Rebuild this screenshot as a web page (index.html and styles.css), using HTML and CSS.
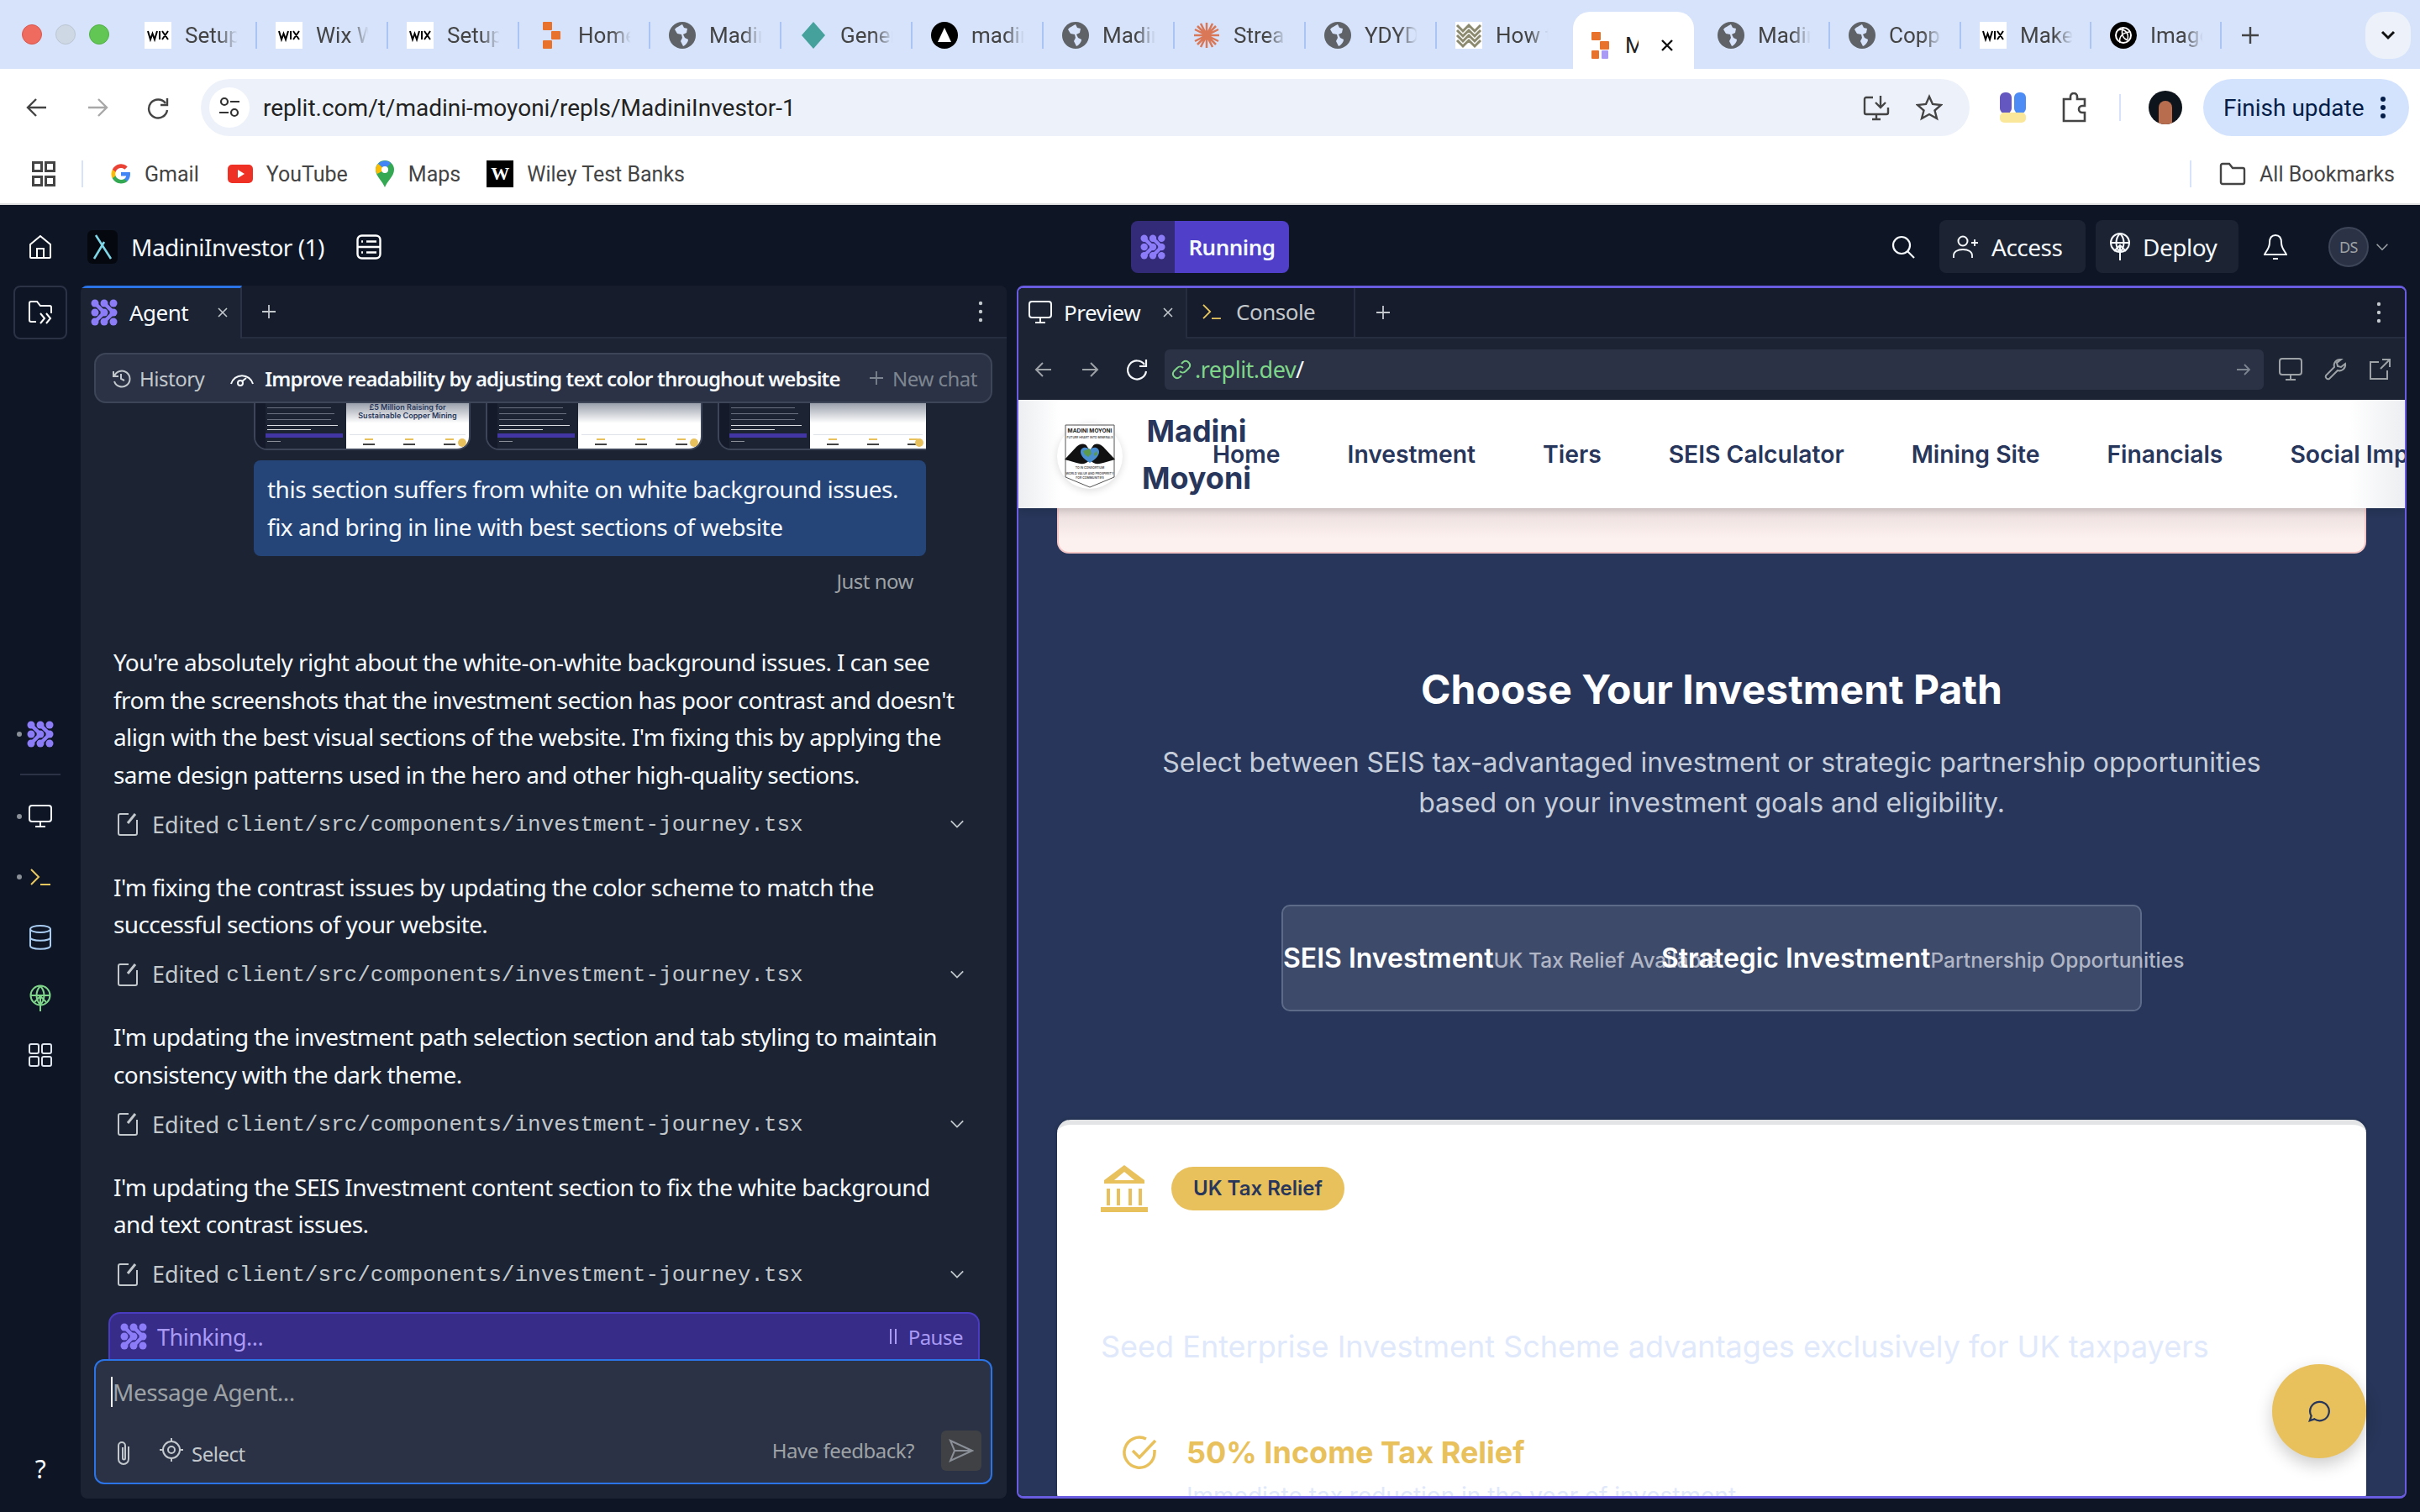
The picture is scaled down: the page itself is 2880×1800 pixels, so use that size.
FILE: index.html
```html
<!DOCTYPE html>
<html lang="en">
<head>
<meta charset="utf-8">
<title>MadiniInvestor</title>
<link rel="stylesheet" href="styles.css">
</head>
<body>
<svg class="defs" width="0" height="0">
  <defs>
    <symbol id="globe" viewBox="0 0 32 32"><circle cx="16" cy="16" r="16" fill="#5f6368"/><path d="M16 3c-3 2-7 3-9 6l3 5 5 1 1 4-2 4 3 6c3-1 6-5 6-8l-4-2-2-4 4-2 1-5-4-1z" fill="#d6e3fb"/></symbol>
    <symbol id="wix" viewBox="0 0 32 32"><rect width="32" height="32" fill="#fff"/><path d="M4 11l3 10 2.500-7 2.500 7 3-10M18 11v10M21 11l7 10M28 11l-7 10" fill="none" stroke="#000" stroke-width="2"/></symbol>
    <symbol id="rep" viewBox="0 0 32 32"><rect x="6" y="0" width="11" height="10" rx="1" fill="#e8722c"/><rect x="16" y="11" width="11" height="10" rx="1" fill="#e8722c"/><rect x="6" y="22" width="11" height="10" rx="1" fill="#e8722c"/></symbol>
    <symbol id="agent" viewBox="0 0 32 32"><g fill="#8c7cf7"><circle cx="5" cy="5" r="4.500"/><circle cx="16" cy="5" r="4.500"/><circle cx="27" cy="5" r="4.500"/><circle cx="5" cy="16" r="4.500"/><circle cx="16" cy="16" r="4.500"/><circle cx="27" cy="16" r="4.500"/><circle cx="5" cy="27" r="4.500"/><circle cx="16" cy="27" r="4.500"/><circle cx="27" cy="27" r="4.500"/></g><path d="M5 5l11 11L5 27M16 5l11 11-11 11" fill="none" stroke="#8c7cf7" stroke-width="4.500"/></symbol>
    <symbol id="edit" viewBox="0 0 26 30"><path d="M14 3H4a2 2 0 0 0-2 2v21a2 2 0 0 0 2 2h18a2 2 0 0 0 2-2V10" fill="none" stroke="currentColor" stroke-width="2"/><path d="M13 14l9-11" fill="none" stroke="currentColor" stroke-width="3"/></symbol>
    <symbol id="chev" viewBox="0 0 20 12"><path d="M2 2l8 8 8-8" fill="none" stroke="currentColor" stroke-width="2"/></symbol>
    <symbol id="monitor" viewBox="0 0 28 28"><rect x="1" y="1" width="26" height="19" rx="3" fill="none" stroke="currentColor" stroke-width="2"/><path d="M14 20v6M8 26h12" fill="none" stroke="currentColor" stroke-width="2"/></symbol>
    <symbol id="term" viewBox="0 0 26 22"><path d="M2 2l9 9-9 9" fill="none" stroke="#e8c75f" stroke-width="2"/><path d="M13 20h12" stroke="#e8c75f" stroke-width="2"/></symbol>
  </defs>
</svg>

<header class="chrome">
  <div class="tabstrip">
    <div class="lights"><i class="light red"></i><i class="light mid"></i><i class="light green"></i></div>
    <div class="tab"><svg class="fav"><use href="#wix"/></svg><span class="tab-title">Setup</span></div>
    <div class="tab"><svg class="fav"><use href="#wix"/></svg><span class="tab-title">Wix W</span></div>
    <div class="tab"><svg class="fav"><use href="#wix"/></svg><span class="tab-title">Setup</span></div>
    <div class="tab"><svg class="fav"><use href="#rep"/></svg><span class="tab-title">Home</span></div>
    <div class="tab"><svg class="fav"><use href="#globe"/></svg><span class="tab-title">Madin</span></div>
    <div class="tab"><svg class="fav" viewBox="0 0 32 32"><path d="M16 0l14 16-14 16L2 16z" fill="#44a19c"/></svg><span class="tab-title">Gener</span></div>
    <div class="tab"><svg class="fav" viewBox="0 0 32 32"><circle cx="16" cy="16" r="16" fill="#000"/><path d="M16 7l8 17H8z" fill="#fff"/></svg><span class="tab-title">madin</span></div>
    <div class="tab"><svg class="fav"><use href="#globe"/></svg><span class="tab-title">Madin</span></div>
    <div class="tab"><svg class="fav" viewBox="0 0 32 32"><path d="M16 1v30M1 16h30M5 5l22 22M27 5L5 27M9 2l14 28M23 2L9 30M2 9l28 14M30 9L2 23" stroke="#d97757" stroke-width="2.500"/></svg><span class="tab-title">Stream</span></div>
    <div class="tab"><svg class="fav"><use href="#globe"/></svg><span class="tab-title">YDYD</span></div>
    <div class="tab"><svg class="fav" viewBox="0 0 32 32"><rect width="32" height="32" fill="#fff"/><path d="M2 4l7 7 7-7 7 7 7-7M2 16l7 7 7-7 7 7 7-7M2 10l7 7 7-7 7 7 7-7M2 22l7 7 7-7 7 7 7-7" fill="none" stroke="#8b8a6e" stroke-width="3"/></svg><span class="tab-title">How t</span></div>
    <div class="tab tab-active"><svg class="fav" viewBox="0 0 32 32"><rect x="6" y="0" width="11" height="10" rx="1" fill="#e8722c"/><rect x="16" y="11" width="11" height="10" rx="1" fill="#e8722c"/><rect x="6" y="22" width="9" height="10" rx="1" fill="#e8722c"/><rect x="18" y="22" width="8" height="10" rx="1" fill="#a99af5"/></svg><span class="tab-title short">M</span><svg class="tab-x" viewBox="0 0 16 16"><path d="M2 2l12 12M14 2L2 14" stroke="#111" stroke-width="2.400"/></svg></div>
    <div class="tab tab-after"><svg class="fav"><use href="#globe"/></svg><span class="tab-title">Madin</span></div>
    <div class="tab"><svg class="fav"><use href="#globe"/></svg><span class="tab-title">Copp</span></div>
    <div class="tab"><svg class="fav"><use href="#wix"/></svg><span class="tab-title">Make</span></div>
    <div class="tab"><svg class="fav" viewBox="0 0 32 32"><circle cx="16" cy="16" r="16" fill="#000"/><circle cx="16" cy="16" r="9" fill="none" stroke="#fff" stroke-width="2"/><path d="M9 10c8-3 14 3 12 11M23 12c-7 1-13 5-11 13M16 7c-3 5-2 12 5 15" fill="none" stroke="#fff" stroke-width="1.500"/></svg><span class="tab-title">Image</span></div>
    <svg class="newtab" viewBox="0 0 22 22"><path d="M11 1v20M1 11h20" stroke="#444" stroke-width="2.400"/></svg>
    <div class="tab-menu"><svg viewBox="0 0 20 12"><path d="M3 2l7 7 7-7" fill="none" stroke="#111" stroke-width="3"/></svg></div>
  </div>

  <div class="toolbar">
    <svg class="tb-ico first" viewBox="0 0 28 28"><path d="M25 14H4M13 4L3 14l10 10" fill="none" stroke="#444" stroke-width="2.400"/></svg>
    <svg class="tb-ico" viewBox="0 0 28 28"><path d="M3 14h21M15 4l10 10-10 10" fill="none" stroke="#a8a8a8" stroke-width="2.400"/></svg>
    <svg class="tb-ico" viewBox="0 0 28 28"><path d="M23 9a11 11 0 1 0 2 8" fill="none" stroke="#444" stroke-width="2.400"/><path d="M25 3v8h-8" fill="none" stroke="#444" stroke-width="2.400"/></svg>
    <div class="omnibox">
      <span class="site-chip"><svg viewBox="0 0 28 28" width="28" height="28"><circle cx="8" cy="7" r="4" fill="none" stroke="#333" stroke-width="2.200"/><path d="M15 7h11M2 20h11" stroke="#333" stroke-width="2.200"/><circle cx="20" cy="20" r="4" fill="none" stroke="#333" stroke-width="2.200"/></svg></span>
      <span class="url">replit.com/t/madini-moyoni/repls/MadiniInvestor-1</span>
      <svg class="omni-ico" viewBox="0 0 34 34"><path d="M13 5H5a2 2 0 0 0-2 2v16a2 2 0 0 0 2 2h24a2 2 0 0 0 2-2v-6M12 31h10M17 25v6M22 3v14M16 11l6 6 6-6" fill="none" stroke="#444" stroke-width="2.400"/></svg>
      <svg class="omni-ico star" viewBox="0 0 32 32"><path d="M16 3l4 9 10 1-7.500 6.500L25 29l-9-5-9 5 2.500-9.500L2 13l10-1z" fill="none" stroke="#444" stroke-width="2.400"/></svg>
    </div>
    <svg class="ext" viewBox="0 0 32 36"><rect x="0" y="0" width="14" height="25" rx="6" fill="#6457c0"/><rect x="17" y="0" width="14" height="25" rx="6" fill="#4d8cf5"/><rect x="0" y="24" width="31" height="12" rx="5" fill="#fbe79a"/></svg>
    <svg class="ext puzzle" viewBox="0 0 32 36"><path d="M3 7h8V4a4 4 0 0 1 8 0v3h9v8h-3a4 4 0 0 0 0 8h3v10H3z" transform="translate(0 1)" fill="none" stroke="#444" stroke-width="2.600"/></svg>
    <i class="tb-sep"></i>
    <div class="profile"><i class="face"></i></div>
    <div class="finish"><span>Finish update</span><svg viewBox="0 0 6 26" width="6" height="26"><circle cx="3" cy="3" r="3" fill="#041e49"/><circle cx="3" cy="13" r="3" fill="#041e49"/><circle cx="3" cy="23" r="3" fill="#041e49"/></svg></div>
  </div>

  <div class="bookmarks">
    <svg class="bm-grid" viewBox="0 0 28 30"><g fill="none" stroke="#444" stroke-width="3"><rect x="1.500" y="1.500" width="10" height="10"/><rect x="16.500" y="1.500" width="10" height="10"/><rect x="1.500" y="18.500" width="10" height="10"/><rect x="16.500" y="18.500" width="10" height="10"/></g></svg>
    <i class="bm-sep"></i>
    <svg class="bm-ico g" viewBox="0 0 24 24"><path d="M23 12.300c0-.8-.1-1.600-.2-2.300H12v4.500h6.200c-.3 1.400-1.100 2.600-2.300 3.400v2.900h3.700c2.100-2 3.400-4.900 3.400-8.500z" fill="#4285f4"/><path d="M12 23.500c3.100 0 5.700-1 7.600-2.700l-3.700-2.900c-1 .7-2.300 1.100-3.900 1.100-3 0-5.500-2-6.400-4.700H1.800v3c1.900 3.700 5.800 6.200 10.200 6.200z" fill="#34a853"/><path d="M5.600 14.300a7 7 0 0 1 0-4.500v-3H1.800a11.500 11.500 0 0 0 0 10.500z" fill="#fbbc05"/><path d="M12 5c1.700 0 3.200.6 4.400 1.700l3.300-3.300A11.300 11.300 0 0 0 1.800 6.800l3.800 3C6.500 7 9 5 12 5z" fill="#ea4335"/></svg>
    <span class="bm-label">Gmail</span>
    <svg class="bm-ico yt" viewBox="0 0 30 24"><rect width="30" height="22" y="1" rx="5" fill="#ee3124"/><path d="M12 7l8 5-8 5z" fill="#fff"/></svg>
    <span class="bm-label">YouTube</span>
    <svg class="bm-ico maps" viewBox="0 0 24 32"><path d="M12 0a11 11 0 0 1 11 11c0 8-8 13-11 21C9 24 1 19 1 11A11 11 0 0 1 12 0z" fill="#34a853"/><path d="M4 4l8 7 7-8a11 11 0 0 0-15 1z" fill="#4285f4"/><path d="M1 11c0-3 1-5 3-7l8 7-9 5c-1-2-2-3-2-5z" fill="#fbbc05"/><circle cx="12" cy="11" r="4" fill="#fff"/></svg>
    <span class="bm-label">Maps</span>
    <span class="bm-w">W</span>
    <span class="bm-label">Wiley Test Banks</span>
    <span class="bm-spacer"></span>
    <i class="bm-sep"></i>
    <svg class="bm-folder" viewBox="0 0 32 28"><path d="M2 4a2 2 0 0 1 2-2h8l4 5h12a2 2 0 0 1 2 2v15a2 2 0 0 1-2 2H4a2 2 0 0 1-2-2z" fill="none" stroke="#444" stroke-width="2.400"/></svg>
    <span class="bm-label">All Bookmarks</span>
  </div>
</header>

<div class="app">
  <div class="topbar">
    <svg class="rail-home" viewBox="0 0 28 30"><path d="M2 12L14 2l12 10v15a1 1 0 0 1-1 1H3a1 1 0 0 1-1-1z" fill="none" stroke="#fff" stroke-width="2"/><path d="M10 28V17h8v11" fill="none" stroke="#fff" stroke-width="2"/></svg>
    <div class="repl-logo"><svg viewBox="0 0 36 40"><rect width="36" height="40" rx="6" fill="#05090f"/><path d="M10 6l18 28M8 34l12-20" fill="none" stroke="#7fd8e8" stroke-width="2.500"/></svg></div>
    <span class="repl-name">MadiniInvestor (1)</span>
    <svg class="repl-db" viewBox="0 0 30 30"><rect x="1.500" y="1.500" width="27" height="27" rx="5" fill="none" stroke="#fff" stroke-width="2.400"/><path d="M1.500 15h27M6 8.500h2M12 8.500h12M6 21.500h2M12 21.500h12" stroke="#fff" stroke-width="2.400"/></svg>
    <div class="topbar-mid">
      <div class="running"><span class="run-ico"><svg width="30" height="30"><use href="#agent"/></svg></span><span class="run-text">Running</span></div>
    </div>
    <svg class="top-ico search" viewBox="0 0 30 30"><circle cx="13" cy="13" r="10" fill="none" stroke="#f5f9fc" stroke-width="2.200"/><path d="M20 20l8 8" stroke="#f5f9fc" stroke-width="2.200"/></svg>
    <div class="top-btn access"><svg viewBox="0 0 32 28" width="32" height="28"><circle cx="12" cy="7" r="5.500" fill="none" stroke="#f5f9fc" stroke-width="2"/><path d="M1 27v-3c0-4 4-7 11-7s11 3 11 7v3M26 5v8M22 9h8" fill="none" stroke="#f5f9fc" stroke-width="1.800"/></svg><span>Access</span></div>
    <div class="top-btn deploy"><svg viewBox="0 0 26 34" width="26" height="34"><circle cx="13" cy="12" r="11" fill="none" stroke="#f5f9fc" stroke-width="2"/><path d="M2 12h22M13 1c-6 6-6 16 0 22 6-6 6-16 0-22M13 33V15M6 22l7-7 7 7" fill="none" stroke="#f5f9fc" stroke-width="2"/></svg><span>Deploy</span></div>
    <svg class="top-ico bell" viewBox="0 0 28 32"><path d="M14 2c5 0 7 4 7 9 0 7 5 11 6 14H1c1-3 6-7 6-14 0-5 2-9 7-9zM11 30h6" fill="none" stroke="#f5f9fc" stroke-width="2"/></svg>
    <div class="avatar">DS</div>
    <svg class="avatar-chev"><use href="#chev"/></svg>
  </div>

  <div class="workspace">
    <nav class="rail">
      <div class="rail-folder"><svg viewBox="0 0 30 30" width="30" height="30"><path d="M10 26H4a2 2 0 0 1-2-2V4a2 2 0 0 1 2-2h7l4 5h11a2 2 0 0 1 2 2v7" fill="none" stroke="#fff" stroke-width="2"/><path d="M15 16l5 6-5 6M22 16l5 6-5 6" fill="none" stroke="#fff" stroke-width="2"/></svg></div>
      <div class="rail-item agent-item"><i class="rail-dot"></i><svg width="32" height="32"><use href="#agent"/></svg></div>
      <i class="rail-div"></i>
      <div class="rail-item mon-item"><i class="rail-dot"></i><svg width="28" height="28" class="white"><use href="#monitor"/></svg></div>
      <div class="rail-item term-item"><i class="rail-dot"></i><svg width="26" height="22"><use href="#term"/></svg></div>
      <div class="rail-item db-item"><svg viewBox="0 0 26 30" width="26" height="30"><ellipse cx="13" cy="5" rx="12" ry="4" fill="none" stroke="#a9cdf2" stroke-width="2"/><path d="M1 5v20c0 5 24 5 24 0V5M1 15c0 5 24 5 24 0" fill="none" stroke="#a9cdf2" stroke-width="2"/></svg></div>
      <div class="rail-item globe-item"><svg viewBox="0 0 26 32" width="26" height="32"><circle cx="13" cy="13" r="11.500" fill="none" stroke="#7fd68a" stroke-width="2"/><path d="M2 13h22M13 2c-6 6-6 16 0 22 6-6 6-16 0-22M13 32V14M6 21l7-7 7 7" fill="none" stroke="#7fd68a" stroke-width="2"/></svg></div>
      <div class="rail-item grid-item"><svg viewBox="0 0 28 28" width="28" height="30"><g fill="none" stroke="#dfe5ee" stroke-width="2"><rect x="1" y="1" width="11" height="11" rx="2"/><rect x="16" y="1" width="11" height="11" rx="2"/><rect x="1" y="16" width="11" height="11" rx="2"/><rect x="16" y="16" width="11" height="11" rx="2"/></g></svg></div>
      <span class="rail-help">?</span>
    </nav>

    <section class="agent-panel">
      <div class="pane-tabs">
        <div class="pane-tab agent-tab"><svg width="32" height="32"><use href="#agent"/></svg><span>Agent</span><svg class="pane-x" viewBox="0 0 14 14"><path d="M2 2l10 10M12 2L2 12" stroke="#c2c8cc" stroke-width="1.600"/></svg></div>
        <svg class="pane-plus" viewBox="0 0 20 20"><path d="M10 2v16M2 10h16" stroke="#c2c8cc" stroke-width="1.800"/></svg>
        <svg class="pane-kebab" viewBox="0 0 6 26"><circle cx="3" cy="3" r="2.200" fill="#c2c8cc"/><circle cx="3" cy="13" r="2.200" fill="#c2c8cc"/><circle cx="3" cy="23" r="2.200" fill="#c2c8cc"/></svg>
      </div>
      <div class="chat-head">
        <svg viewBox="0 0 24 24" width="24" height="24"><path d="M3 4v6h6" fill="none" stroke="#c2c8cc" stroke-width="2"/><path d="M4 10a9.500 9.500 0 1 1 0 6" fill="none" stroke="#c2c8cc" stroke-width="2"/><path d="M12 7v6l4 2" fill="none" stroke="#c2c8cc" stroke-width="2"/></svg>
        <span class="hist">History</span>
        <svg class="gauge" viewBox="0 0 30 24" width="30" height="24"><path d="M2 19a13.500 13.500 0 0 1 26 0" fill="none" stroke="#f5f9fc" stroke-width="2"/><circle cx="13" cy="18" r="3" fill="none" stroke="#f5f9fc" stroke-width="2"/><path d="M15 16l5-4" stroke="#f5f9fc" stroke-width="2"/></svg>
        <strong class="chat-title">Improve readability by adjusting text color throughout website</strong>
        <span class="new-chat"><svg viewBox="0 0 18 18" width="18" height="18"><path d="M9 1v16M1 9h16" stroke="#7d8590" stroke-width="1.800"/></svg>New chat</span>
      </div>

      <div class="chat-scroll">
        <div class="thumbs">
          <div class="thumb"><div class="thumb-dark"></div><div class="thumb-light"><span class="thumb-cap">£5 Million Raising for Sustainable Copper Mining</span><i class="thumb-stats"></i><i class="thumb-coin"></i></div></div>
          <div class="thumb"><div class="thumb-dark"></div><div class="thumb-light"><i class="thumb-stats"></i><i class="thumb-coin"></i></div></div>
          <div class="thumb"><div class="thumb-dark"></div><div class="thumb-light"><i class="thumb-stats"></i><i class="thumb-coin"></i></div></div>
        </div>
        <div class="bubble">this section suffers from white on white background issues. fix and bring in line with best sections of website</div>
        <div class="when">Just now</div>

        <p class="msg">You're absolutely right about the white-on-white background issues. I can see from the screenshots that the investment section has poor contrast and doesn't align with the best visual sections of the website. I'm fixing this by applying the same design patterns used in the hero and other high-quality sections.</p>
        <div class="edit-row"><svg class="edit-ico"><use href="#edit"/></svg><span class="edit-word">Edited</span><code>client/src/components/investment-journey.tsx</code><svg class="edit-chev"><use href="#chev"/></svg></div>

        <p class="msg">I'm fixing the contrast issues by updating the color scheme to match the successful sections of your website.</p>
        <div class="edit-row"><svg class="edit-ico"><use href="#edit"/></svg><span class="edit-word">Edited</span><code>client/src/components/investment-journey.tsx</code><svg class="edit-chev"><use href="#chev"/></svg></div>

        <p class="msg">I'm updating the investment path selection section and tab styling to maintain consistency with the dark theme.</p>
        <div class="edit-row"><svg class="edit-ico"><use href="#edit"/></svg><span class="edit-word">Edited</span><code>client/src/components/investment-journey.tsx</code><svg class="edit-chev"><use href="#chev"/></svg></div>

        <p class="msg">I'm updating the SEIS Investment content section to fix the white background and text contrast issues.</p>
        <div class="edit-row"><svg class="edit-ico"><use href="#edit"/></svg><span class="edit-word">Edited</span><code>client/src/components/investment-journey.tsx</code><svg class="edit-chev"><use href="#chev"/></svg></div>
      </div>

      <div class="thinking">
        <svg width="32" height="32"><use href="#agent"/></svg>
        <span class="think-text">Thinking...</span>
        <span class="pause"><i></i><i></i>Pause</span>
      </div>
      <div class="composer">
        <div class="composer-line"><i class="caret"></i><span>Message Agent...</span></div>
        <div class="composer-foot">
          <svg viewBox="0 0 22 30" width="22" height="30"><path d="M17 7v15a6 6 0 0 1-12 0V6a4 4 0 0 1 8 0v15a1.500 1.500 0 0 1-3 0V8" fill="none" stroke="#c2c8cc" stroke-width="2"/></svg>
          <svg class="sel-ico" viewBox="0 0 28 28" width="28" height="28"><circle cx="14" cy="14" r="10" fill="none" stroke="#c2c8cc" stroke-width="2"/><circle cx="14" cy="14" r="4" fill="none" stroke="#c2c8cc" stroke-width="2"/><path d="M14 0v4M14 24v4M0 14h4M24 14h4" stroke="#c2c8cc" stroke-width="2"/></svg>
          <span class="sel-text">Select</span>
          <span class="feedback">Have feedback?</span>
          <div class="send"><svg viewBox="0 0 30 30" width="30" height="30"><path d="M2 3l26 12L2 27l5-12zM7 15h21" fill="none" stroke="#8a8f98" stroke-width="2"/></svg></div>
        </div>
      </div>
    </section>

    <section class="preview-panel">
      <div class="pane-tabs prev-tabs">
        <div class="pane-tab preview-tab"><svg width="28" height="28" class="white"><use href="#monitor"/></svg><span>Preview</span><svg class="pane-x" viewBox="0 0 14 14"><path d="M2 2l10 10M12 2L2 12" stroke="#c2c8cc" stroke-width="1.600"/></svg></div>
        <div class="pane-tab console-tab"><svg width="24" height="20"><use href="#term"/></svg><span>Console</span></div>
        <svg class="pane-plus" viewBox="0 0 20 20"><path d="M10 2v16M2 10h16" stroke="#c2c8cc" stroke-width="1.800"/></svg>
        <svg class="pane-kebab" viewBox="0 0 6 26"><circle cx="3" cy="3" r="2.200" fill="#c2c8cc"/><circle cx="3" cy="13" r="2.200" fill="#c2c8cc"/><circle cx="3" cy="23" r="2.200" fill="#c2c8cc"/></svg>
      </div>
      <div class="addr-row">
        <svg class="addr-ico" viewBox="0 0 24 24"><path d="M21 12H4M11 4l-8 8 8 8" fill="none" stroke="#9da2a6" stroke-width="2"/></svg>
        <svg class="addr-ico" viewBox="0 0 24 24"><path d="M3 12h17M13 4l8 8-8 8" fill="none" stroke="#9da2a6" stroke-width="2"/></svg>
        <svg class="addr-ico bright" viewBox="0 0 28 28"><path d="M23 8a11 11 0 1 0 2 8" fill="none" stroke="#f5f9fc" stroke-width="2.200"/><path d="M25 2v8h-8" fill="none" stroke="#f5f9fc" stroke-width="2.200"/></svg>
        <div class="addr-input">
          <svg viewBox="0 0 24 24" width="24" height="24"><path d="M10 14a5 5 0 0 0 7 0l4-4a5 5 0 0 0-7-7l-2 2M14 10a5 5 0 0 0-7 0l-4 4a5 5 0 0 0 7 7l2-2" fill="none" stroke="#7fd68a" stroke-width="2"/></svg>
          <span class="addr-host">.replit.dev</span><span class="addr-path">/</span>
          <svg class="addr-go" viewBox="0 0 20 20" width="20" height="20"><path d="M2 10h15M11 4l6 6-6 6" fill="none" stroke="#7d8590" stroke-width="1.800"/></svg>
        </div>
        <svg class="addr-tool"><use href="#monitor"/></svg>
        <svg class="addr-tool" viewBox="0 0 28 28"><path d="M20 2a7 7 0 0 0-7 9L3 21a3 3 0 0 0 4 4l10-10a7 7 0 0 0 9-8l-5 4-4-1-1-4 5-4z" fill="none" stroke="#9da2a6" stroke-width="2"/></svg>
        <svg class="addr-tool" viewBox="0 0 28 28"><path d="M13 5H3v20h20V15M15 13L26 2M17 2h9v9" fill="none" stroke="#9da2a6" stroke-width="2"/></svg>
      </div>

      <div class="site">
        <div class="site-nav">
          <div class="site-logo">
            <svg viewBox="0 0 60 78" width="60" height="78">
              <path d="M1 2h58M1 2v62l29 12 29-12V2" fill="none" stroke="#555" stroke-width="1"/>
              <text class="logo-t1" x="30" y="11" text-anchor="middle">MADINI MOYONI</text>
              <text class="logo-t2" x="30" y="18" text-anchor="middle">FUTURE HEART INTO MINERALS</text>
              <path d="M0 43l14-15c3-3 10-6 13 0l3 4 3-4c3-6 10-3 13 0l14 15-14 4c-6 2-12 2-16-4-4 6-10 6-16 4z" fill="#111"/>
              <path d="M30 47c-6-4-11-8-11-13 0-6 8-7 11-2 3-5 11-4 11 2 0 5-5 9-11 13z" fill="#4a8fd0"/>
              <path d="M22 33l8-3 2 6-4 4-4-3zM35 36l3-3 1 4-3 2z" fill="#5a9a4a"/>
              <text class="logo-t2" x="30" y="54" text-anchor="middle">TO IN CONSORTIUM</text>
              <text class="logo-t2" x="30" y="61" text-anchor="middle">WORLD VALUE AND PROSPERITY</text>
              <text class="logo-t2" x="30" y="66" text-anchor="middle">FOR COMMUNITIES</text>
            </svg>
          </div>
          <div class="site-brand">Madini<br>Moyoni</div>
          <div class="site-links"><a>Home</a><a>Investment</a><a>Tiers</a><a>SEIS Calculator</a><a>Mining Site</a><a>Financials</a><a>Social Impact</a></div>
        </div>
        <div class="site-body">
          <div class="alert-card"></div>
          <h2 class="path-title">Choose Your Investment Path</h2>
          <p class="path-sub">Select between SEIS tax-advantaged investment or strategic partnership opportunities<br>based on your investment goals and eligibility.</p>
          <div class="path-tabs">
            <div class="path-tab"><b>SEIS Investment</b><span>UK Tax Relief Available</span></div>
            <div class="path-tab second"><b>Strategic Investment</b><span>Partnership Opportunities</span></div>
          </div>
          <div class="seis-card">
            <div class="seis-head">
              <svg viewBox="0 0 56 60" width="56" height="60"><path d="M28 2L4 20v4h48v-4z" fill="#e9c15c"/><path d="M28 10l-12 10h24z" fill="#fff"/><path d="M9 30v20M21 30v20M35 30v20M47 30v20" stroke="#e9c15c" stroke-width="4"/><rect y="52" width="56" height="6" fill="#e9c15c"/></svg>
              <span class="seis-badge">UK Tax Relief</span>
            </div>
            <p class="seis-lead">Seed Enterprise Investment Scheme advantages exclusively for UK taxpayers</p>
            <div class="benefit">
              <svg viewBox="0 0 44 44" width="44" height="44"><path d="M40 19v3a18 18 0 1 1-10-16" fill="none" stroke="#e9c15c" stroke-width="3.500"/><path d="M14 20l8 8L41 8" fill="none" stroke="#e9c15c" stroke-width="3.500"/></svg>
              <h3>50% Income Tax Relief</h3>
            </div>
            <p class="benefit-sub">Immediate tax reduction in the year of investment</p>
          </div>
        </div>
        <div class="fab"><svg viewBox="0 0 30 30" width="28" height="28"><path d="M15 3a12 12 0 1 1-6 22l-6 2 2-6A12 12 0 0 1 15 3z" fill="none" stroke="#27365a" stroke-width="2.400"/></svg></div>
      </div>
    </section>
  </div>
</div>
</body>
</html>
```

FILE: styles.css
```css
* { box-sizing: border-box; }
html, body { margin: 0; padding: 0; height: 1800px; width: 2880px; overflow: hidden; background: #0e1525; }
.defs { position: absolute; }
svg { display: block; flex: none; }
p, h2, h3 { margin: 0; }

/* ---------- browser chrome ---------- */
.chrome { font-family: "Roboto", "Liberation Sans", sans-serif; color: #444; background: #fff; }
.tabstrip { height: 82px; background: #d6e3fb; display: flex; align-items: flex-start; }
.lights { width: 150px; display: flex; gap: 16px; padding: 29px 0 0 26px; }
.light { width: 24px; height: 24px; border-radius: 50%; }
.red { background: #ef6a5f; border: 1px solid #d9584e; }
.mid { background: #ced7e4; border: 1px solid #bcc5d2; }
.green { background: #62c654; border: 1px solid #52b045; }
.tab { width: 156px; height: 32px; margin-top: 26px; padding-left: 22px; display: flex; align-items: center; gap: 16px; border-right: 2px solid #a9c4f5; }
.fav { width: 32px; height: 32px; }
.tab-title { width: 64px; overflow: hidden; white-space: nowrap; font-size: 26px; color: #444; -webkit-mask-image: linear-gradient(90deg, #000 62%, transparent 98%); mask-image: linear-gradient(90deg, #000 62%, transparent 98%); }
.tab:nth-child(12) { width: 156px; border-right: none; }
.tab-active { width: 144px; height: 68px; margin: 14px 0 0 6px; padding: 12px 0 0 16px; background: #fff; border: none; border-radius: 20px 20px 0 0; gap: 14px; }
.tab-active .tab-title { color: #222; width: 16px; -webkit-mask-image: none; mask-image: none; }
.tab-x { width: 16px; height: 16px; margin-left: 12px; }
.tab-after { margin-left: 6px; }
.tab:nth-child(16), .tab:nth-child(17) { width: 155px; }
.newtab { width: 22px; height: 22px; margin: 31px 0 0 23px; }
.tab-menu { width: 54px; height: 56px; margin: 14px 0 0 126px; background: #edf2fa; border-radius: 22px; display: flex; align-items: center; justify-content: center; }
.tab-menu svg { width: 20px; height: 12px; }

.toolbar { height: 92px; display: flex; align-items: flex-start; padding-top: 12px; background: #fff; }
.tb-ico { width: 28px; height: 28px; margin: 20px 0 0 44px; }
.tb-ico.first { margin-left: 30px; }
.omnibox { width: 2105px; height: 68px; margin-left: 37px; background: #edf2fa; border-radius: 34px; display: flex; align-items: center; padding-left: 10px; }
.site-chip { width: 48px; height: 48px; background: #fff; border-radius: 50%; display: flex; align-items: center; justify-content: center; }
.url { margin-left: 16px; font-size: 28px; color: #222; flex: 1; white-space: nowrap; }
.omni-ico { width: 34px; height: 34px; margin-right: 30px; }
.omni-ico.star { width: 32px; height: 32px; margin-right: 32px; }
.ext { width: 32px; height: 36px; margin: 16px 0 0 36px; }
.puzzle { margin-left: 41px; }
.tb-sep { width: 2px; height: 32px; margin: 18px 0 0 37px; background: #d6e3fb; }
.profile { width: 40px; height: 40px; margin: 14px 0 0 33px; border-radius: 50%; background: #0d141c; overflow: hidden; display: flex; justify-content: center; padding-top: 12px; }
.face { width: 16px; height: 28px; background: #b86d4f; border-radius: 8px 8px 0 0; }
.finish { width: 245px; height: 68px; margin-left: 25px; background: #d3e3fd; border-radius: 34px; display: flex; align-items: center; padding: 0 28px 0 24px; justify-content: space-between; font-size: 28px; color: #041e49; }

.bookmarks { height: 70px; display: flex; align-items: center; padding: 0 30px 2px 38px; background: #fff; border-bottom: 2px solid #e0e0e0; }
.bm-grid { width: 28px; height: 30px; }
.bm-sep { width: 2px; height: 32px; margin-left: 31px; background: #d6e3fb; }
.bm-ico { height: 32px; }
.g { width: 24px; height: 24px; margin-left: 33px; }
.yt { width: 30px; height: 24px; margin-left: 34px; }
.maps { width: 24px; margin-left: 32px; }
.bm-label { font-size: 25px; color: #444; margin-left: 16px; white-space: nowrap; }
.bm-w { width: 32px; height: 32px; margin-left: 31px; background: #000; color: #fff; font: 700 22px/32px "Liberation Serif", serif; text-align: center; }
.bm-spacer { flex: 1; }
.bm-folder { width: 32px; height: 28px; margin-left: 33px; }

/* ---------- replit ---------- */
.app { height: 1556px; background: #0e1525; font-family: "Noto Sans", "Liberation Sans", sans-serif; color: #f5f9fc; letter-spacing: -.5px; }
.topbar { height: 96px; padding-top: 3px; display: flex; align-items: center; }
.rail-home { width: 28px; height: 30px; margin-left: 34px; }
.repl-logo { margin-left: 42px; }
.repl-logo svg { width: 36px; height: 40px; }
.repl-name { margin-left: 16px; width: 250px; font-size: 28px; white-space: nowrap; }
.repl-db { width: 30px; height: 30px; margin-left: 18px; }
.topbar-mid { width: 1796px; display: flex; padding-left: 892px; }
.running { display: flex; height: 62px; border-radius: 8px; overflow: hidden; }
.run-ico { width: 52px; background: #332a78; display: flex; align-items: center; justify-content: center; }
.run-text { width: 136px; background: #4f3fc9; font-size: 26px; font-weight: 600; line-height: 62px; text-align: center; }
.top-ico.search { width: 30px; height: 30px; }
.top-btn { height: 63px; display: flex; align-items: center; gap: 14px; background: #1c2333; border-radius: 8px; padding: 0 16px; font-size: 28px; }
.access { width: 174px; margin-left: 28px; }
.deploy { width: 170px; margin-left: 12px; }
.top-ico.bell { width: 28px; height: 32px; margin-left: 30px; }
.avatar { width: 48px; height: 48px; margin-left: 49px; border-radius: 50%; background: #2b3245; border: 2px solid #3d4558; color: #9da2a6; font-size: 18px; line-height: 44px; text-align: center; }
.avatar-chev { width: 16px; height: 10px; margin-left: 8px; color: #9da2a6; }

.workspace { height: 1444px; display: flex; }
.rail { width: 96px; position: relative; display: flex; flex-direction: column; align-items: center; }
.rail-folder { width: 64px; height: 64px; margin-left: 0; border: 2px solid #2b3245; border-radius: 8px; display: flex; align-items: center; justify-content: center; }
.rail-item { position: relative; width: 96px; display: flex; justify-content: center; }
.rail-dot { position: absolute; left: 20px; top: 50%; margin-top: -3px; width: 6px; height: 6px; border-radius: 50%; background: #8a8f98; }
.agent-item { margin-top: 454px; height: 32px; }
.rail-div { width: 48px; height: 2px; margin-top: 31px; background: #2b3245; }
.mon-item { margin-top: 35px; height: 28px; }
.term-item { margin-top: 47px; height: 22px; }
.db-item { margin-top: 46px; height: 30px; }
.globe-item { margin-top: 41px; height: 32px; }
.grid-item { margin-top: 37px; height: 30px; }
.rail-help { margin-top: 458px; font-size: 30px; color: #f5f9fc; line-height: 40px; }
.white { color: #f5f9fc; }

.pane-tabs { height: 63px; display: flex; align-items: center; border-bottom: 2px solid #262d3f; }
.pane-tab { height: 63px; padding-bottom: 2px; display: flex; align-items: center; font-size: 26px; }
.agent-panel { width: 1102px; height: 1444px; background: #1c2333; border-radius: 8px; display: flex; flex-direction: column; overflow: hidden; }
.agent-tab { width: 192px; padding-left: 12px; gap: 14px; border-top: 3px solid #2b74e8; border-right: 2px solid #2b3245; background: #1c2333; margin-bottom: -2px; }
.pane-x { width: 14px; height: 14px; margin-left: auto; margin-right: 14px; }
.pane-plus { width: 20px; height: 20px; margin-left: 22px; }
.pane-kebab { width: 6px; height: 26px; margin-left: auto; margin-right: 28px; }
.agent-panel .pane-tabs { background: #161c2b; }
.chat-head { position: relative; z-index: 2; height: 60px; margin: 17px 17px 0 16px; flex: none; padding: 0 16px 0 18px; background: #2b3245; border: 2px solid #3d4558; border-radius: 14px; display: flex; align-items: center; font-size: 24px; white-space: nowrap; }
.hist { margin-left: 10px; color: #c2c8cc; }
.gauge { margin-left: 30px; }
.chat-title { margin-left: 12px; font-weight: 600; letter-spacing: -.85px; }
.new-chat { margin-left: auto; display: flex; align-items: center; gap: 10px; color: #7d8590; }

.chat-scroll { flex: 1; overflow: hidden; }
.thumbs { display: flex; gap: 18px; margin-left: 206px; width: 800px; height: 56px; overflow: hidden; }
.thumb { width: 258px; flex: none; height: 56px; display: flex; border: 2px solid #3d4558; border-top: none; border-radius: 0 0 16px 16px; overflow: hidden; }
.thumb:last-child { width: 248px; border-right: none; border-radius: 0 0 0 16px; }
.thumb-dark { width: 108px; flex: none;
  background:
    linear-gradient(#6b7080, #6b7080) 14px 5px / 76px 1px no-repeat,
    linear-gradient(#6b7080, #6b7080) 14px 12px / 80px 1px no-repeat,
    linear-gradient(#6b7080, #6b7080) 14px 19px / 76px 1px no-repeat,
    linear-gradient(#d8dbe0, #d8dbe0) 14px 26px / 84px 1px no-repeat,
    linear-gradient(#d8dbe0, #d8dbe0) 14px 31px / 52px 1px no-repeat,
    linear-gradient(#4236a5, #4236a5) 12px 36px / 92px 5px no-repeat,
    linear-gradient(#8a8f98, #8a8f98) 14px 45px / 16px 1px no-repeat,
    linear-gradient(90deg, #141a29 12px, #1c2333 12px); }
.thumb-light { flex: 1; position: relative; background: linear-gradient(#9aa0ac, #fff 44%); overflow: hidden; }
.thumb-cap { display: block; padding: 0 2px; font: 600 9px/10px "Inter", sans-serif; letter-spacing: 0; color: #27365a; text-align: center; }
.thumb-stats { position: absolute; left: 4px; right: 4px; bottom: 3px; height: 14px; border-top: 1px solid #dfe2e8; background: repeating-linear-gradient(90deg, transparent 0 18px, #e9c15c 18px 28px, transparent 28px 48px) 0 4px / 100% 2px no-repeat, repeating-linear-gradient(90deg, transparent 0 16px, #444 16px 30px, transparent 30px 48px) 0 10px / 100% 2px no-repeat; }
.thumb-coin { position: absolute; right: 3px; bottom: 2px; width: 10px; height: 10px; border-radius: 50%; background: #e9c15c; }
.bubble { width: 800px; height: 114px; margin: 12px 0 0 206px; padding: 12px 16px; background: #254579; border-radius: 8px; font-size: 28px; line-height: 44.500px; color: #f5f9fc; }
.when { width: 785px; margin: 15px 0 0 206px; height: 30px; text-align: right; font-size: 24px; line-height: 30px; color: #9da2a6; }
.when + .msg { margin-top: 59px; }
.msg { margin: 27.500px 0 0 39px; width: 1020px; font-size: 28px; line-height: 44.500px; letter-spacing: -.6px; color: #f5f9fc; }
.edit-row { margin: 12px 0 0 39px; width: 1013px; height: 50px; display: flex; align-items: center; color: #c2c8cc; font-size: 27px; letter-spacing: 0; }
.edit-ico { width: 26px; height: 30px; margin-left: 4px; }
.edit-word { margin-left: 16px; }
.edit-row code { margin: 2px 0 0 8px; font: 26px "Liberation Mono", monospace; color: #c2c8cc; }
.edit-chev { width: 18px; height: 12px; margin-left: auto; margin-right: 0; }

.thinking { height: 56px; flex: none; margin: 0 32px 0 33px; padding: 0 18px 0 12px; background: #372c87; border: 2px solid #4a3cc0; border-bottom: none; border-radius: 14px 14px 0 0; display: flex; align-items: center; font-size: 27px; color: #a99af5; }
.think-text { margin-left: 12px; }
.pause { margin-left: auto; display: flex; align-items: center; font-size: 24px; }
.pause i { width: 2px; height: 18px; margin-right: 4px; background: #a99af5; }
.pause i + i { margin-right: 14px; }
.composer { height: 149px; flex: none; margin: 0 17px 17px 16px; padding: 18px 11px 12px 18px; background: #2b3245; border: 2px solid #2b74e8; border-radius: 12px; display: flex; flex-direction: column; justify-content: space-between; color: #9da2a6; }
.composer-line { display: flex; align-items: center; height: 38px; font-size: 28px; }
.caret { width: 2px; height: 36px; background: #f5f9fc; }
.composer-foot { display: flex; align-items: flex-start; height: 50px; }
.composer-foot > svg:first-child { margin: 12px 0 0 4px; }
.sel-ico { margin: 9px 0 0 32px; }
.sel-text { margin: 11px 0 0 10px; font-size: 24px; color: #c2c8cc; }
.feedback { margin: 7px 0 0 auto; font-size: 24px; color: #9da2a6; }
.send { width: 48px; height: 48px; margin-left: 32px; background: #3f4144; border-radius: 6px; display: flex; align-items: center; justify-content: center; }

.preview-panel { width: 1654px; height: 1444px; margin-left: 12px; border: 2px solid #6a5ce0; border-top-width: 3px; border-bottom-width: 3px; border-radius: 8px; background: #1c2333; display: flex; flex-direction: column; overflow: hidden; }
.prev-tabs { height: 60px; background: #161c2b; flex: none; }
.prev-tabs .pane-tab { height: 60px; }
.preview-tab { width: 199px; padding-left: 12px; gap: 14px; background: #1c2333; margin-bottom: -2px; }
.preview-tab .pane-x { margin-right: 14px; }
.console-tab { width: 202px; padding-left: 17px; gap: 17px; color: #c2c8cc; border-left: 2px solid #262d3f; border-right: 2px solid #262d3f; }
.prev-tabs .pane-plus { margin-left: 23px; }
.addr-row { height: 73px; flex: none; display: flex; align-items: center; border-bottom: 0; }
.addr-ico { width: 24px; height: 24px; margin-left: 18px; }
.addr-ico + .addr-ico { margin-left: 31px; }
.addr-ico.bright { width: 28px; height: 28px; margin-left: 30px; }
.addr-input { width: 1308px; height: 48px; margin-left: 19px; background: #2b3245; border-radius: 6px; display: flex; align-items: center; padding: 0 14px 0 8px; font-size: 27px; }
.addr-host { margin-left: 4px; color: #7fd68a; }
.addr-path { color: #f5f9fc; }
.addr-go { margin-left: auto; }
.addr-tool { width: 28px; height: 28px; margin-left: 25px; color: #9da2a6; }
.addr-input + .addr-tool { margin-left: 18px; }

.site { flex: 1; position: relative; overflow: hidden; background: #27365a; font-family: "Inter", "Liberation Sans", sans-serif; letter-spacing: 0; }
.site-nav { position: relative; z-index: 2; height: 129px; display: flex; align-items: center; background: linear-gradient(90deg, #eceef1, #fff 3%, #fff 96%, #eceef1); box-shadow: 0 2px 10px rgba(0, 0, 0, .18); }
.site-logo { width: 78px; height: 78px; margin: 4px 0 0 46px; border-radius: 50%; background: #fff; box-shadow: 0 2px 10px rgba(0, 0, 0, .14); display: flex; align-items: center; justify-content: center; flex: none; }
.logo-t1 { font: 700 6.500px "Inter", sans-serif; fill: #222; }
.logo-t2 { font: 600 3.500px "Inter", sans-serif; fill: #444; }
.site-brand { width: 140px; margin-left: 18px; text-align: center; font-size: 36px; font-weight: 700; line-height: 56px; color: #27365a; flex: none; }
.site-links { margin-left: -51px; display: flex; gap: 80px; font-size: 28.300px; font-weight: 600; color: #27365a; white-space: nowrap; }

.site-body { height: 1200px; padding: 0 46px; text-align: center; }
.alert-card { height: 54px; background: linear-gradient(#e9dcdc, #fdf1ef 70%); border: 2px solid #f5c6c6; border-top: none; border-radius: 0 0 14px 14px; }
.path-title { margin-top: 132px; font-size: 48px; line-height: 60px; font-weight: 700; color: #fff; }
.path-sub { margin-top: 33px; font-size: 32px; line-height: 48px; color: #c6cdda; }
.path-tabs { width: 1024px; height: 127px; margin: 97px auto 0; background: #3e4a6a; border: 2px solid #5d6b88; border-radius: 10px; display: flex; text-align: left; position: relative; }
.path-tab { display: flex; align-items: center; white-space: nowrap; width: 450px; flex: none; }
.path-tab b { font-size: 32px; font-weight: 600; color: #fff; }
.path-tab span { margin-top: 4px; font-size: 24.500px; font-weight: 500; color: #b0b6c6; }
.seis-card { height: 460px; margin-top: 129px; padding: 46px 52px 0; background: #fff; border-top: 6px solid #e3e4e6; border-radius: 16px; text-align: left; box-shadow: 0 0 4px rgba(0, 0, 0, .2); }
.seis-head { display: flex; align-items: center; gap: 28px; }
.seis-badge { height: 52px; padding: 0 26px; border-radius: 26px; background: #e9c15c; font-size: 24px; line-height: 52px; font-weight: 600; color: #27365a; }
.seis-lead { margin-top: 136px; font-size: 36px; line-height: 44px; color: #dfe9fb; white-space: nowrap; }
.benefit { margin: 80px 0 0 24px; display: flex; align-items: center; gap: 34px; }
.benefit h3 { font-size: 36px; line-height: 48px; font-weight: 700; color: #e9c15c; white-space: nowrap; }
.benefit-sub { margin: 10px 0 0 102px; font-size: 28px; line-height: 36px; color: #dfe9fb; white-space: nowrap; }
.fab { position: absolute; right: 46px; top: 1148px; width: 112px; height: 112px; border-radius: 50%; background: #e9c15c; box-shadow: 0 8px 20px rgba(0, 0, 0, .2); display: flex; align-items: center; justify-content: center; }
```
